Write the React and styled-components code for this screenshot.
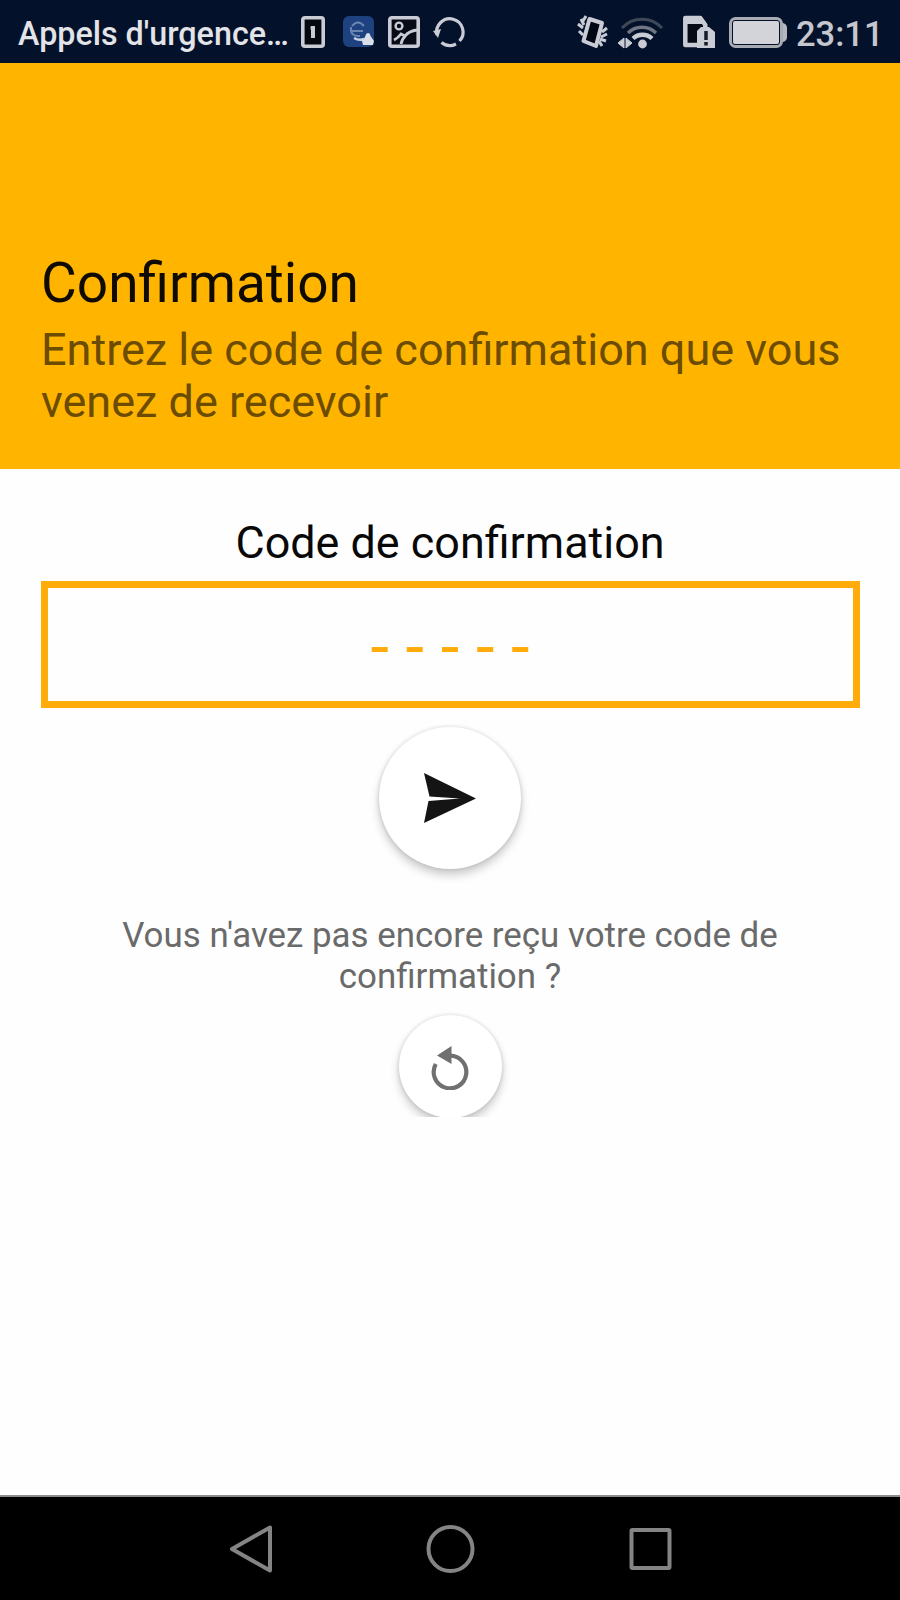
import React from "react"
import styled, { createGlobalStyle } from "styled-components"

const palette = {
    status: '#04112b',
    status_icon: '#c9ccd4',
    accent: '#ffb400',
    field_border: '#ffac0a',
    nav_icon: '#848484',
};

const GlobalStyle = createGlobalStyle`
    body
    {
        margin: 0;
        background: #fefefe;
        font-family: Roboto, "Liberation Sans", sans-serif;
    }

    *
    {
        box-sizing: border-box;
    }
`;

const Screen = styled.div`
    display: flex;
    flex-direction: column;
    width: 900px;
    height: 1600px;
    overflow: hidden;
    background: #fefefe;
`;

const StatusBar = styled.div`
    display: flex;
    align-items: center;
    flex-shrink: 0;
    height: 63px;
    padding: 0 10px 0 18px;
    background: ${palette.status};
    color: #e2e4e8;
`;

const StatusText = styled.div`
    flex-shrink: 0;
    padding-top: 5px;
    font-weight: 500;
    line-height: 40px;
    white-space: nowrap;
`;

const Carrier = styled(StatusText)`
    width: 283px;
    font-size: 32.3px;
`;

const Clock = styled(StatusText)`
    margin-left: 8px;
    font-size: 34.5px;
    color: #c4c7ce;
`;

const StatusIcon = styled.svg`
    display: block;
    flex-shrink: 0;
    width: ${props => props.$width}px;
    height: 34px;
    margin-left: ${props => props.$left || 0}px;
    fill: none;
    stroke: ${palette.status_icon};
    overflow: visible;
`;

const Header = styled.header`
    display: flex;
    flex-direction: column;
    justify-content: flex-end;
    flex-shrink: 0;
    height: 406px;
    padding: 0 41px 41px;
    background: ${palette.accent};
`;

const Title = styled.h1`
    margin: 0 0 11px;
    font-size: 55px;
    font-weight: 400;
    line-height: 60px;
    color: #100b00;
`;

const Subtitle = styled.p`
    margin: 0;
    font-size: 45px;
    line-height: 52px;
    color: #6b4c00;
    white-space: nowrap;
`;

const Content = styled.main`
    display: flex;
    flex-direction: column;
    align-items: center;
    flex-grow: 1;
    padding: 48px 41px 0;
`;

const FieldLabel = styled.div`
    font-size: 44.9px;
    line-height: 52px;
    color: #080808;
`;

const CodeField = styled.div`
    display: flex;
    align-items: center;
    justify-content: center;
    width: 819px;
    height: 127px;
    margin-top: 12px;
    padding-top: 4px;
    border: 7px solid ${palette.field_border};
    font-size: 67px;
    line-height: 80px;
    color: ${palette.field_border};
`;

const RoundButton = styled.div`
    display: flex;
    align-items: center;
    justify-content: center;
    width: ${props => props.$size}px;
    height: ${props => props.$size}px;
    border-radius: 50%;
    background: #fff;
    box-shadow: 0 6px 10px rgba(0, 0, 0, 0.2), 0 0 4px rgba(0, 0, 0, 0.14);

    svg
    {
        display: block;
    }
`;

const SendRow = styled.div`
    margin-top: 19px;
`;

const Hint = styled.p`
    margin: 46px 0 0;
    font-size: 34.9px;
    line-height: 41px;
    text-align: center;
    color: #6a6a6a;
`;

// The shadow of the resend button is cut off by the bottom of its row
const ResendRow = styled.div`
    height: 120px;
    padding: 18px 20px 0;
    overflow: hidden;
`;

const NavBar = styled.nav`
    display: flex;
    justify-content: center;
    align-items: center;
    gap: 152px;
    flex-shrink: 0;
    height: 105px;
    border-top: 2px solid #8c8c8c;
    background: #000;

    svg
    {
        fill: none;
        stroke: ${palette.nav_icon};
        stroke-width: 4;
        stroke-linejoin: round;
        overflow: visible;
    }
`;

const SimIcon = () => (
    <StatusIcon $width={24} viewBox="0 0 24 34">
        <rect x="1.8" y="2.8" width="20.4" height="28.4" rx="2" fill="#05080f" strokeWidth="3.6" />
        <path d="M12 11v12" strokeWidth="4" />
        <path d="M9.5 13h3" strokeWidth="3" />
    </StatusIcon>
);

const BlueAppIcon = () => (
    <StatusIcon $width={31} $left={18} viewBox="0 0 31 34">
        <rect x="0" y="1" width="31" height="31" rx="6" fill="#1d427f" stroke="none" />
        <path d="M9 11q6-7 12 0M9 16h11M8 12q-1 10 9 9" stroke="#6b86b3" strokeWidth="2" />
        <path d="M11 23q5 3 10 1" stroke="#c9d3e4" strokeWidth="2.5" />
        <path d="M25 18q2 0 2.5 3l3.5 5-1 4h-10l-1-4 3-4q1-4 3-4z" fill="#d9dee8" stroke="none" />
    </StatusIcon>
);

const PictureIcon = () => (
    <StatusIcon $width={32} $left={14} viewBox="0 0 32 34">
        <rect x="1.8" y="2.8" width="28.4" height="28.4" rx="2" fill="#060b16" strokeWidth="3.6" />
        <circle cx="11" cy="11" r="3.4" strokeWidth="2.4" />
        <path d="M6 25q4-2 7-6l4 2q4-5 12-6M13 29q1-5 5-9" strokeWidth="2.8" />
    </StatusIcon>
);

const SyncIcon = () => (
    <StatusIcon $width={32} $left={13} viewBox="0 0 32 34">
        <path d="M4 20A13.2 13.2 0 1 1 26.5 26" strokeWidth="3.2" />
        <path d="M8.5 27.5A13.2 13.2 0 0 0 23 29" strokeWidth="3.2" />
        <path d="M0 16l8-2-3 9z" fill={palette.status_icon} stroke="none" />
    </StatusIcon>
);

const VibrateIcon = () => (
    <StatusIcon $width={30} $left={113} viewBox="0 0 30 34">
        <path d="M11.5 4l12.5 4-6 23-12.5-5z" strokeWidth="4" fill="#020814" strokeLinejoin="round" />
        <path d="M8 1L5 6M3 4l3 6M0 9l5 4M1 16l4 4M29 13l-5 4M29 19l-6 3M28 26l-6-2M24 31l-3-5" strokeWidth="3" />
    </StatusIcon>
);

const WifiIcon = () => (
    <StatusIcon $width={46} $left={10} viewBox="0 0 46 34">
        <path d="M4 13a27 27 0 0 1 40 0" stroke="#3f4859" strokeWidth="3" />
        <path d="M10 18a20 20 0 0 1 28 0" stroke="#6f7684" strokeWidth="3.4" />
        <path d="M15 23.5a14 14 0 0 1 19 0" strokeWidth="4.4" />
        <circle cx="24.5" cy="29" r="4.4" fill={palette.status_icon} stroke="none" />
        <path d="M0 28l6-5v10zM14 28l-6-5v10z" fill={palette.status_icon} strokeWidth="1" />
    </StatusIcon>
);

const SimAlertIcon = () => (
    <StatusIcon $width={32} $left={19} viewBox="0 0 32 34">
        <path d="M2.3 3h15l5 7v20h-20z" fill="#050a14" strokeWidth="4.5" strokeLinejoin="round" />
        <path d="M1 1h17l6 8H1z" fill={palette.status_icon} stroke="none" />
        <path d="M14 16l4-4h8l6 5v16H14z" fill={palette.status_icon} stroke="none" />
        <path d="M23 16v9M23 27v3.5" stroke="#141a28" strokeWidth="3.5" />
    </StatusIcon>
);

const BatteryIcon = () => (
    <StatusIcon $width={59} $left={14} viewBox="0 0 59 34">
        <rect x="1.5" y="3.5" width="51" height="28" rx="5" stroke="#a8abb2" strokeWidth="3" />
        <rect x="4" y="6" width="46" height="23" rx="2" fill="#d2d4d9" stroke="none" />
        <path d="M54 8q4 1 4 5v9q0 4-4 5z" fill="#b4b7be" stroke="none" />
    </StatusIcon>
);

class App extends React.Component{
    render(){
        return (
        <Screen>
            <GlobalStyle />
            <StatusBar>
                <Carrier>Appels d'urgence…</Carrier>
                <SimIcon />
                <BlueAppIcon />
                <PictureIcon />
                <SyncIcon />
                <VibrateIcon />
                <WifiIcon />
                <SimAlertIcon />
                <BatteryIcon />
                <Clock>23:11</Clock>
            </StatusBar>
            <Header>
                <Title>Confirmation</Title>
                <Subtitle>Entrez le code de confirmation que vous<br />venez de recevoir</Subtitle>
            </Header>
            <Content>
                <FieldLabel>Code de confirmation</FieldLabel>
                <CodeField>- - - - -</CodeField>
                <SendRow>
                    <RoundButton $size={142}>
                        <svg width="52" height="50" viewBox="0 0 52 50">
                            <path d="M0 0L52 25.5 0 50 4.5 28 36 25.5 5.500 23.5z" fill="#141414" />
                        </svg>
                    </RoundButton>
                </SendRow>
                <Hint>Vous n'avez pas encore reçu votre code de<br />confirmation ?</Hint>
                <ResendRow>
                    <RoundButton $size={103}>
                        <svg width="38" height="46" viewBox="0 0 38 46">
                            <path d="M4.8 20A16.3 16.3 0 1 0 19 11.7" fill="none" stroke="#707070" strokeWidth="4.2" />
                            <path d="M6 11.5L20.5 2v18z" fill="#707070" />
                        </svg>
                    </RoundButton>
                </ResendRow>
            </Content>
            <NavBar>
                <svg width="48" height="48" viewBox="0 0 48 48">
                    <path d="M6 24L44 2.5v43z" />
                </svg>
                <svg width="48" height="48" viewBox="0 0 48 48">
                    <circle cx="24.5" cy="24" r="22" />
                </svg>
                <svg width="48" height="48" viewBox="0 0 48 48">
                    <rect x="5.5" y="5" width="38" height="38" rx="1" />
                </svg>
            </NavBar>
        </Screen>);
    }
}

export default App
